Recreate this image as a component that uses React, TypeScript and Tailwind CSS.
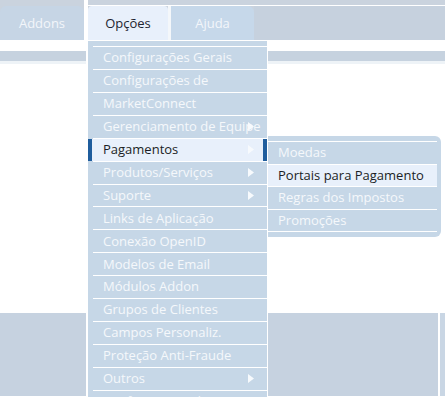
import type { ReactNode } from 'react'

type Item = { label: string; arrow?: boolean; active?: boolean }

const mainItems: Item[] = [
  { label: 'Configurações Gerais' },
  { label: 'Configurações de' },
  { label: 'MarketConnect' },
  { label: 'Gerenciamento de Equipe', arrow: true },
  { label: 'Pagamentos', arrow: true, active: true },
  { label: 'Produtos/Serviços', arrow: true },
  { label: 'Suporte', arrow: true },
  { label: 'Links de Aplicação' },
  { label: 'Conexão OpenID' },
  { label: 'Modelos de Email' },
  { label: 'Módulos Addon' },
  { label: 'Grupos de Clientes' },
  { label: 'Campos Personaliz.' },
  { label: 'Proteção Anti-Fraude' },
  { label: 'Outros', arrow: true },
  { label: 'Configurações de Automação' },
]

const subItems: Item[] = [
  { label: 'Moedas' },
  { label: 'Portais para Pagamento', active: true },
  { label: 'Regras dos Impostos' },
  { label: 'Promoções' },
]

function Arrow({ className }: { className: string }) {
  return (
    <svg width="6" height="9" viewBox="0 0 6 9" className={className}>
      <polygon points="0,0 6,4.5 0,9" fill="#f7fafd" />
    </svg>
  )
}

function Tab({ children, className }: { children: ReactNode; className: string }) {
  return (
    <div className={`flex h-[34px] items-center justify-center pt-[2px] text-[13px] ${className}`}>
      {children}
    </div>
  )
}

export default function App() {
  return (
    <div
      className="relative h-[397px] w-[445px] overflow-hidden bg-white"
      style={{ fontFamily: '"Open Sans", "DejaVu Sans", sans-serif' }}
    >
      {/* top navigation */}
      <div className="flex h-[40px] bg-[#cad3de]">
        <div className="flex w-[84px] flex-col">
          <div className="h-[6px]" />
          <Tab className="rounded-t-[6px] bg-[#c6d5e5] text-[#f3f6fa]">Addons</Tab>
        </div>
        <div className="w-[4px] bg-white" />
        <div className="flex flex-1 flex-col">
          <div className="h-[5px]" />
          <div className="h-[1px] bg-white" />
          <div className="flex">
            <Tab className="w-[80px] rounded-t-[4px] bg-[#e8f0fb] text-[#1e2530]">Opções</Tab>
            <div className="w-[3px] bg-[#f4f7fa]" />
            <Tab className="w-[83px] rounded-tr-[6px] bg-[#c6d8ea] text-[#f3f6fa]">Ajuda</Tab>
            <div className="flex-1 bg-[#c6d1de]" />
          </div>
        </div>
      </div>

      {/* page content behind the menu */}
      <div className="mt-[11px] h-[10px] bg-[#c6d2df]" />
      <div className="h-[3px] bg-[#eef3f7]" />
      <div className="mt-[249px] flex h-[83px]">
        <div className="flex-1 bg-[#c6d2e0]" />
        <div className="w-[2px] bg-white" />
        <div className="w-[5px] bg-[#c9d6e4]" />
      </div>

      {/* Opções dropdown */}
      <div className="absolute left-[86px] top-[40px] w-[182px] border-l-2 border-r border-t border-white bg-[#c6d7e7] pt-[5px]">
        {mainItems.map((item) => (
          <div key={item.label} className="flex flex-col">
            <div className="ml-[5px] h-[1px] bg-white" />
            <div
              className={`relative flex h-[21.93px] items-center whitespace-nowrap text-[13px] ${
                item.active
                  ? 'border-x-4 border-[#1f5d9d] bg-[#e8f0fb] pl-[11px] text-[#1b1f26]'
                  : 'pl-[15px] text-[#f5f8fb]'
              }`}
            >
              {item.label}
              {item.arrow && (
                <Arrow className={`absolute top-[6.5px] ${item.active ? 'right-[9px]' : 'right-[13px]'}`} />
              )}
            </div>
          </div>
        ))}
      </div>

      {/* Pagamentos submenu */}
      <div className="absolute left-[268px] top-[136px] w-[173px] rounded-r-[6px] bg-[#c6d7e7] pb-[5px] pr-[4px] pt-[5px]">
        {subItems.map((item) => (
          <div key={item.label} className="flex flex-col">
            <div className="h-[1px] bg-white" />
            <div
              className={`flex h-[21.6px] items-center whitespace-nowrap pl-[10px] text-[13px] ${
                item.active ? 'bg-[#e8f0fb] text-[#1b1f26]' : 'text-[#f5f8fb]'
              }`}
            >
              {item.label}
            </div>
          </div>
        ))}
        <div className="h-[1px] bg-white" />
      </div>
    </div>
  )
}
